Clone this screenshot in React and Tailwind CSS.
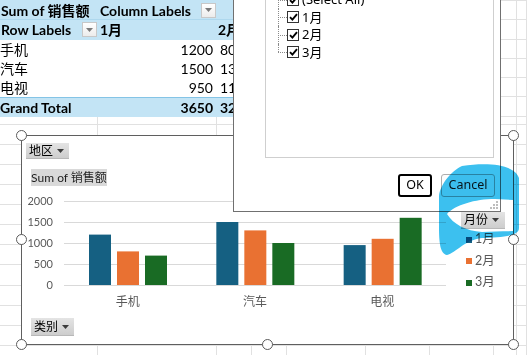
import React from "react";

const COLS = [98, 119, 35, 35, 79, 64, 64, 23, 10];
const ROW_H = [20.3, 19.3, 19.3, 19.3, 19.3, 19.3, 8, 20.1, 20.1, 20.1, 20.1, 20.1, 20.1, 20.1, 20.1, 20.1, 20.1, 20.1, 20.1];
const HCLS = {
  20.3: "h-[20.3px]",
  19.3: "h-[19.3px]",
  8: "h-[8px]",
  20.1: "h-[20.1px]",
};
const WCLS = ["w-[98px]", "w-[119px]", "w-[35px]", "w-[35px]", "w-[79px]", "w-[64px]", "w-[64px]", "w-[23px]", "w-[10px]"];

function DropBtn() {
  return (
    <div className="w-[15px] h-[15px] border border-[#c8c8c8] bg-gradient-to-b from-white to-[#ececec] flex items-center justify-center shrink-0">
      <svg width="7" height="4" viewBox="0 0 7 4">
        <path d="M0 0H7L3.5 4Z" fill="#7a7a7a" />
      </svg>
    </div>
  );
}

const PIVOT = {
  0: [
    <span className="font-bold pl-[1px]">Sum of 销售额</span>,
    <div className="flex items-center justify-between w-full pl-[2px] pr-[1px]">
      <span className="font-bold">Column Labels</span>
      <DropBtn />
    </div>,
    null,
    null,
    null,
  ],
  1: [
    <div className="flex items-center justify-between w-full pl-[1px] pr-[1px]">
      <span className="font-bold">Row Labels</span>
      <DropBtn />
    </div>,
    <span className="font-bold pl-[2px]">1月</span>,
    <span className="font-bold pl-[1px]">2月</span>,
    <span className="font-bold pl-[1px]">3月</span>,
    <span className="font-bold pl-[1px]">Grand Total</span>,
  ],
  2: ["手机", "1200", "800", "700", "2700"],
  3: ["汽车", "1500", "1300", "1000", "3800"],
  4: ["电视", "950", "1100", "1600", "3650"],
  5: ["Grand Total", "3650", "3200", "3300", "10150"],
};

function PivotCell({ r, c }) {
  const content = PIVOT[r][c];
  let cls = "h-full flex items-center overflow-hidden whitespace-nowrap shrink-0 " + WCLS[c];
  if (r === 0) cls += " bg-[#c3e4f5] border-b border-[#aed8ee] pt-[1px]";
  else if (r === 1) cls += " bg-[#c3e4f5]";
  else if (r === 5) cls += " bg-[#c3e4f5] border-t border-[#84c4e6] font-bold";
  else cls += " bg-white";
  if (r >= 2) {
    if (c === 0) return <div className={cls}><span>{content}</span></div>;
    if (c === 1) return <div className={cls + " justify-end pr-[4px]"}>{content}</div>;
    return <div className={cls + " pl-[3px]"}>{content}</div>;
  }
  return <div className={cls}>{content}</div>;
}

function Sheet() {
  return (
    <div className="flex flex-col w-[527px] text-[14px] text-black font-['Lato','Noto_Sans_CJK_SC',sans-serif]">
      {ROW_H.map((h, r) => (
        <div key={r} className={"flex shrink-0 " + HCLS[h]}>
          {COLS.map((w, c) =>
            r <= 5 && c <= 4 ? (
              <PivotCell key={c} r={r} c={c} />
            ) : (
              <div
                key={c}
                className={
                  "h-full shrink-0 border-r border-b border-[#e1e1e1] " +
                  WCLS[c] +
                  (r === 0 ? " border-t" : "")
                }
              />
            )
          )}
        </div>
      ))}
    </div>
  );
}

function FieldBtn({ children, className }) {
  return (
    <div
      className={
        "flex items-center gap-[4px] pl-[3px] bg-gradient-to-b from-[#e4e4e4] to-[#cdcdcd] shadow-[0_1px_0_#b8b8b8] text-[12px] text-black " +
        className
      }
    >
      <span>{children}</span>
      <svg width="7" height="4" viewBox="0 0 7 4">
        <path d="M0 0H7L3.5 4Z" fill="#3c3c3c" />
      </svg>
    </div>
  );
}

const DATA = [
  [1200, 800, 700],
  [1500, 1300, 1000],
  [950, 1100, 1600],
];
const COLORS = ["#156082", "#e97132", "#196b24"];

function Chart() {
  return (
    <div className="absolute left-[21px] top-[135px] w-[493px] h-[210px] border border-[#5f5f5f] bg-white flex font-['Lato','Noto_Sans_CJK_SC',sans-serif]">
      <div className="w-[439px] flex flex-col shrink-0">
        <FieldBtn className="mt-[7px] ml-[4px] w-[43px] h-[15px]">地区</FieldBtn>
        <div className="mt-[11px] ml-[9px] w-[76px] h-[17px] bg-[#d9d9d9] flex items-center justify-center text-[12px] text-[#1e1e1e] whitespace-nowrap">
          Sum of 销售额
        </div>
        <div className="mt-[8px] flex">
          <div className="w-[42px] h-[98px] flex flex-col justify-between items-end pr-[11px] text-[11px] text-[#595959]">
            {["2000", "1500", "1000", "500", "0"].map((t) => (
              <span key={t} className="h-[14px] leading-[14px]">{t}</span>
            ))}
          </div>
          <svg width="382" height="98" viewBox="0 0 382 98">
            {[7, 28, 49, 70, 91].map((y) => (
              <line key={y} x1="0" x2="382" y1={y + 0.5} y2={y + 0.5} stroke="#d9d9d9" strokeWidth="1" />
            ))}
            {DATA.map((g, i) =>
              g.map((v, j) => {
                const h = v * 0.042;
                return (
                  <rect
                    key={i + "-" + j}
                    x={25 + i * 127.33 + j * 28}
                    y={91 - h}
                    width="22"
                    height={h}
                    fill={COLORS[j]}
                  />
                );
              })
            )}
          </svg>
        </div>
        <div className="mt-[3px] ml-[42px] w-[382px] flex text-[12px] text-[#595959]">
          {["手机", "汽车", "电视"].map((t) => (
            <div key={t} className="flex-1 text-center h-[14px] leading-[14px]">{t}</div>
          ))}
        </div>
        <FieldBtn className="mt-[9px] ml-[9px] w-[43px] h-[17px]">类别</FieldBtn>
      </div>
      <div className="flex flex-col pt-[76px]">
        <FieldBtn className="w-[44px] h-[16px]">月份</FieldBtn>
        <div className="mt-[1px] flex flex-col">
          {["1月", "2月", "3月"].map((t, i) => (
            <div key={t} className="h-[21.5px] flex items-center pl-[5px]">
              <div
                className={
                  "w-[6px] h-[6px] " +
                  (i === 0 ? "bg-[#156082]" : i === 1 ? "bg-[#e97132]" : "bg-[#196b24]")
                }
              />
              <span className="ml-[3px] text-[12.5px] text-[#595959]">{t}</span>
            </div>
          ))}
        </div>
      </div>
    </div>
  );
}

function Handle({ pos }) {
  return (
    <div
      className={
        "absolute w-[11px] h-[11px] rounded-full border-[1.5px] border-[#5b5b5b] bg-white " + pos
      }
    />
  );
}

function Check() {
  return (
    <div className="w-[12px] h-[12px] border border-[#333] bg-white flex items-center justify-center shrink-0">
      <svg width="9" height="8" viewBox="0 0 9 8">
        <path d="M1 4.2L3.4 6.6L8 1.2" fill="none" stroke="#000" strokeWidth="1.9" />
      </svg>
    </div>
  );
}

function TreeRow({ label, last }) {
  return (
    <div className="flex items-center h-[17.5px] overflow-hidden">
      <div className="relative w-[21px] self-stretch shrink-0">
        <div
          className={
            "absolute left-[12px] top-0 border-l border-dotted border-[#8a8a8a] " +
            (last ? "h-1/2" : "h-full")
          }
        />
        <div className="absolute left-[12px] top-1/2 w-[9px] border-t border-dotted border-[#8a8a8a]" />
      </div>
      <Check />
      <span className="ml-[3px] text-[13px] text-black leading-[15px] h-[15px]">{label}</span>
    </div>
  );
}

function Dialog() {
  return (
    <div className="absolute left-[233px] top-[-30px] w-[268px] h-[242px] bg-white border border-[#707070] flex flex-col font-['Noto_Sans','Noto_Sans_CJK_SC',sans-serif]">
      <div className="ml-[31px] mt-[15px] w-[229px] h-[172px] border border-[#cfcfcf] pt-[4px] flex flex-col">
        <TreeRow label="(Select All)" />
        <TreeRow label="1月" />
        <TreeRow label="2月" />
        <TreeRow label="3月" last />
      </div>
      <div className="mt-[16px] flex justify-end gap-[9px] pr-[5px]">
        <div className="w-[34px] h-[23px] rounded-[3px] border-2 border-black bg-white flex items-center justify-center text-[12.5px] text-black">
          OK
        </div>
        <div className="w-[54px] h-[23px] rounded-[3px] border border-[#adadad] bg-[#fdfdfd] flex items-center justify-center text-[12.5px] text-[#1a1a1a]">
          Cancel
        </div>
      </div>
      <svg className="absolute right-[2px] bottom-[2px]" width="9" height="9" viewBox="0 0 9 9">
        <rect x="7" y="1" width="2" height="2" fill="#bdbdbd" />
        <rect x="4" y="4" width="2" height="2" fill="#bdbdbd" />
        <rect x="7" y="4" width="2" height="2" fill="#bdbdbd" />
        <rect x="1" y="7" width="2" height="2" fill="#bdbdbd" />
        <rect x="4" y="7" width="2" height="2" fill="#bdbdbd" />
        <rect x="7" y="7" width="2" height="2" fill="#bdbdbd" />
      </svg>
    </div>
  );
}

export default function App() {
  return (
    <div className="relative w-[527px] h-[355px] overflow-hidden bg-white isolate">
      <Sheet />
      <Chart />
      <Handle pos="left-[16px] top-[130px]" />
      <Handle pos="left-[16px] top-[234px]" />
      <Handle pos="left-[16px] top-[339px]" />
      <Handle pos="left-[262px] top-[339px]" />
      <Handle pos="left-[508px] top-[339px]" />
      <Handle pos="left-[508px] top-[234px]" />
      <Handle pos="left-[508px] top-[130px]" />
      <Handle pos="left-[262px] top-[130px]" />
      <Dialog />
      <svg
        className="absolute left-0 top-0 pointer-events-none mix-blend-multiply"
        width="527"
        height="355"
        viewBox="0 0 527 355"
      >
        <path
          fillRule="evenodd"
          fill="#3cc0ef"
          d="M462 166 C490 162 515 165 519 178 L519 228 C519 237 500 237 482 238 C464 240 456 253 447 255 C440 254 439 242 439 226 L439 196 C440 185 451 171 462 166 Z M447 214 C455 205 475 199 495 199 L513 200 L513 231 L482 232 C466 231 453 224 447 214 Z"
        />
      </svg>
    </div>
  );
}
